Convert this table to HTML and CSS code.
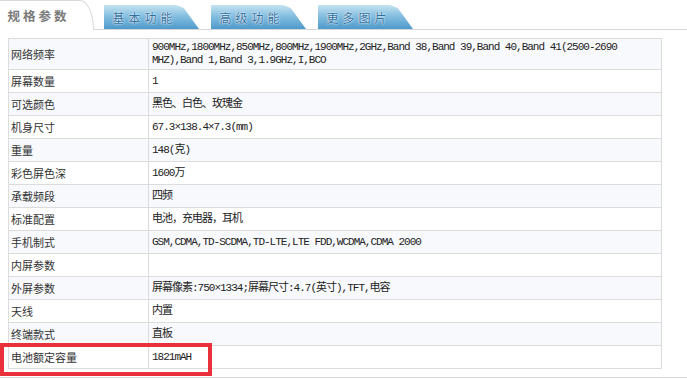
FILE: index.html
```html
<!DOCTYPE html>
<html lang="zh-CN">
<head>
<meta charset="utf-8">
<title>规格参数</title>
<link rel="stylesheet" href="styles.css">
</head>
<body>
<div class="tabs">
  <div class="tab tab-active">规格参数</div>
  <div class="tab tab-blue">基本功能</div>
  <div class="tab tab-blue">高级功能</div>
  <div class="tab tab-blue">更多图片</div>
</div>
<div class="content">
  <table class="spec">
    <tr class="first"><td class="k">网络频率</td><td class="v">900MHz,1800MHz,850MHz,800MHz,1900MHz,2GHz,Band 38,Band 39,Band 40,Band 41(2500-2690 MHZ),Band 1,Band 3,1.9GHz,I,BCO</td></tr>
    <tr><td class="k">屏幕数量</td><td class="v">1</td></tr>
    <tr><td class="k">可选颜色</td><td class="v">黑色、白色、玫瑰金</td></tr>
    <tr><td class="k">机身尺寸</td><td class="v">67.3×138.4×7.3(mm)</td></tr>
    <tr><td class="k">重量</td><td class="v">148(克)</td></tr>
    <tr><td class="k">彩色屏色深</td><td class="v">1600万</td></tr>
    <tr><td class="k">承载频段</td><td class="v">四频</td></tr>
    <tr><td class="k">标准配置</td><td class="v">电池，充电器，耳机</td></tr>
    <tr><td class="k">手机制式</td><td class="v">GSM,CDMA,TD-SCDMA,TD-LTE,LTE FDD,WCDMA,CDMA 2000</td></tr>
    <tr><td class="k">内屏参数</td><td class="v"></td></tr>
    <tr><td class="k">外屏参数</td><td class="v">屏幕像素:750×1334;屏幕尺寸:4.7(英寸),TFT,电容</td></tr>
    <tr><td class="k">天线</td><td class="v">内置</td></tr>
    <tr><td class="k">终端款式</td><td class="v">直板</td></tr>
    <tr><td class="k">电池额定容量</td><td class="v">1821mAH</td></tr>
  </table>
  <div class="highlight"></div>
</div>
<div class="footer-line"></div>
</body>
</html>
```
FILE: styles.css
```css
html, body {
  margin: 0;
  padding: 0;
  background: #fff;
}
body {
  width: 687px;
  height: 380px;
  overflow: hidden;
  font-family: "Liberation Mono", "Noto Sans CJK SC", monospace;
}
.tabs {
  display: flex;
  align-items: flex-end;
  height: 29px;
  border-bottom: 1px solid #d6d6d6;
}
.tab {
  height: 24px;
  display: flex;
  align-items: center;
  justify-content: center;
  font-family: "Noto Sans CJK SC", sans-serif;
  box-sizing: border-box;
}
.tab-active {
  width: 94px;
  height: 30px;
  margin-bottom: -1px;
  padding-right: 16px;
  background: #fff;
  font-size: 12.5px;
  font-weight: bold;
  letter-spacing: 3px;
  color: #7a7a7a;
  border-top: 1px solid #d8d8d8;
  border-right: 1px solid #d8d8d8;
  border-top-right-radius: 14px 30px;
}
.tab-blue {
  width: 95px;
  margin-left: 12px;
  padding-right: 14px;
  font-size: 12px;
  letter-spacing: 4px;
  color: #2f6f9e;
  text-shadow: 0 0 2px #fff, 0 0 1px #fff;
  background: linear-gradient(#c6e3f2 0%, #86bfe0 45%, #4e9acb 100%);
  clip-path: polygon(0 0, 76% 0, 84% 12%, 100% 100%, 0 100%);
}
.tab-active + .tab-blue { margin-left: 10px; }
.content {
  position: relative;
  padding: 8px 0 0 8px;
}
.spec {
  border-collapse: collapse;
  width: 654px;
  border: 1px solid #dcdcdc;
  font-size: 11px;
  line-height: 13px;
}
.spec tr:nth-child(odd) { background: #f8f9fc; }
.spec tr:nth-child(even) { background: #fff; }
.spec td {
  border: 1px solid #dcdcdc;
  height: 23px;
  padding: 2px;
  box-sizing: border-box;
  vertical-align: middle;
}
.spec .first td { height: 31px; }
.spec .k {
  width: 140px;
  font-family: "Noto Sans CJK SC", sans-serif;
  font-size: 11px;
  color: #333;
}
.spec .v {
  color: #222;
  letter-spacing: -1px;
  padding-left: 3px;
}
.highlight {
  position: absolute;
  left: 0;
  top: 313px;
  width: 212px;
  height: 33px;
  border: 4px solid #e8313a;
  box-sizing: border-box;
}
.footer-line {
  margin-top: 8px;
  border-top: 1px solid #d8d8d8;
}
```
